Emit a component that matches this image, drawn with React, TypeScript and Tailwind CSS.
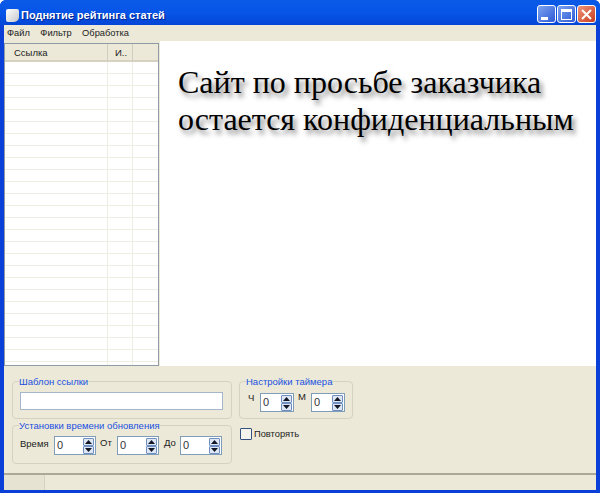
const ui = { fontFamily: '"Liberation Sans", Arial, sans-serif' };

function Spin({ className = "w-[42px]" }: { className?: string }) {
  return (
    <div className={`flex h-[19px] shrink-0 items-center justify-between border border-[#7f9db9] bg-white pl-[2px] pr-[1px] ${className}`}>
      <span className="text-[11px] leading-none text-[#333]">0</span>
      <div className="flex h-[16px] w-[11px] flex-col gap-0">
        {[0, 1].map((i) => (
          <div key={i} className="flex h-[8px] items-center justify-center rounded-[1px] border border-[#6f8fc0] bg-[#dfe7f4]">
            <svg width="7" height="4" viewBox="0 0 7 4">
              <path d={i === 0 ? "M3.5 0L7 4H0Z" : "M0 0H7L3.5 4Z"} fill="#101828" />
            </svg>
          </div>
        ))}
      </div>
    </div>
  );
}

function Group({ title, className, children }: { title: string; className: string; children?: React.ReactNode }) {
  return (
    <div className={`relative rounded-[4px] border border-[#d5d2bf] ${className}`}>
      <span className="absolute left-[6px] top-[-6px] whitespace-nowrap bg-[#ece9d8] text-[9.5px] leading-[12px] text-[#1a50e0]">{title}</span>
      {children}
    </div>
  );
}

function CaptionButton({ className, children }: { className: string; children: React.ReactNode }) {
  return (
    <div className={`flex h-[18px] w-[19px] items-center justify-center rounded-[3px] border border-white ${className}`}>
      {children}
    </div>
  );
}

export default function App() {
  const rows = Array.from({ length: 26 });
  return (
    <div style={ui} className="flex h-[493px] w-[600px] flex-col overflow-hidden rounded-t-[6px] bg-[#0a3fd8]">
      <div className="flex h-[25px] shrink-0 items-start justify-between bg-gradient-to-b from-[#0a5ae6] via-[#0755e8] to-[#0346d6] pl-[6px] pr-[4px] pt-[5px]">
        <div className="flex h-[20px] items-center gap-[2px]">
          <div className="h-[13px] w-[13px] rounded-[2px] rounded-br-[5px] bg-gradient-to-br from-white to-[#c5c8cc]" />
          <span className="text-[11px] font-bold text-white [text-shadow:1px_1px_1px_#02218c]">Поднятие рейтинга статей</span>
        </div>
        <div className="flex gap-[1px]">
          <CaptionButton className="bg-gradient-to-br from-[#7da2ef] to-[#2f59d6]">
            <div className="mt-[8px] mr-[4px] h-[3px] w-[7px] bg-white" />
          </CaptionButton>
          <CaptionButton className="bg-gradient-to-br from-[#7da2ef] to-[#2f59d6]">
            <div className="h-[11px] w-[11px] border border-t-[3px] border-white" />
          </CaptionButton>
          <CaptionButton className="bg-gradient-to-br from-[#ee9478] to-[#c9391a]">
            <svg width="11" height="11" viewBox="0 0 11 11">
              <path d="M1 1L10 10M10 1L1 10" stroke="white" strokeWidth="2" />
            </svg>
          </CaptionButton>
        </div>
      </div>

      <div className="mx-[4px] mb-[3px] flex min-h-0 flex-1 flex-col bg-[#ece9d8]">
        <div className="flex h-[16px] shrink-0 items-center gap-[10.5px] pl-[3px] pt-[1px] text-[9.3px] text-[#222]">
          <span>Файл</span>
          <span>Фильтр</span>
          <span>Обработка</span>
        </div>

        <div className="flex h-[325px] shrink-0">
          <div className="mt-[2px] h-[323px] w-[155px] shrink-0 overflow-hidden border border-[#8e9ba6] bg-white">
            <div className="flex h-[18px] border-b-[2px] border-[#d6d2c2] bg-[#ece9d8] text-[9.5px] leading-[18px] text-[#222]">
              <div className="w-[103px] border-r border-[#cfcdbd] pl-[9px]">Ссылка</div>
              <div className="w-[25px] border-r border-[#cfcdbd] pl-[7px]">И..</div>
            </div>
            {rows.map((_, i) => (
              <div key={i} className="flex h-[12px] border-b border-[#efeee3]">
                <div className="w-[103px] border-r border-[#efeee3]" />
                <div className="w-[25px] border-r border-[#efeee3]" />
              </div>
            ))}
          </div>
          <div className="ml-px min-w-0 flex-1 bg-white pl-[18px] pt-[23px]">
            <div
              style={{ fontFamily: '"Liberation Serif", "Times New Roman", serif' }}
              className="whitespace-nowrap text-[32px] leading-[37px] text-black [text-shadow:3px_4px_5px_rgba(0,0,0,0.5)]"
            >
              <div>Сайт по просьбе заказчика</div>
              <div>остается конфиденциальным</div>
            </div>
          </div>
        </div>

        <div className="flex flex-1 gap-[7px] pl-[8px] pt-[15px]">
          <div className="flex w-[220px] flex-col gap-[6px]">
            <Group title="Шаблон ссылки" className="h-[38px] pl-[7px] pt-[10px]">
              <div className="h-[18px] w-[203px] border border-[#a5b5cb] bg-white" />
            </Group>
            <Group title="Установки времени обновления" className="flex h-[39px] items-start pl-[7px] pt-[10px] text-[9.5px] text-[#222]">
              <span className="mr-[6px] mt-[1px] w-[28px]">Время</span>
              <Spin />
              <span className="ml-[4px] mr-[5px] w-[12px]">От</span>
              <Spin />
              <span className="ml-[5px] mr-[4px] w-[12px]">До</span>
              <Spin />
            </Group>
          </div>
          <div className="flex flex-col">
            <Group title="Настройки таймера" className="flex h-[38px] w-[114px] items-start pl-[8px] pt-[11px] text-[9.5px] text-[#222]">
              <span className="mr-[5px] -mt-[2px] w-[7px]">Ч</span>
              <Spin className="w-[34px]" />
              <span className="ml-[4px] mr-[5px] -mt-[3px] w-[8px]">М</span>
              <Spin className="w-[34px]" />
            </Group>
            <div className="mt-[8px] flex items-center gap-[2px] pl-[1px] text-[9.3px] text-[#222]">
              <div className="h-[12px] w-[12px] rounded-[1px] border border-[#34517f] bg-[#f4f3ec]" />
              <span className="mt-[1px]">Повторять</span>
            </div>
          </div>
        </div>

        <div className="flex h-[17px] shrink-0 border-t-[2px] border-[#aca899] bg-[#ece9d8]">
          <div className="w-[41px] border-r border-[#d5d2bf] bg-[#e6e3d2]" />
        </div>
      </div>
    </div>
  );
}
